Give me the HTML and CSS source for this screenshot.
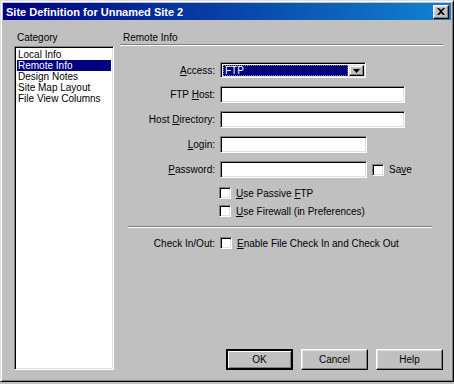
FILE: index.html
```html
<!doctype html>
<html lang="en">
    <head>
        <meta charset="utf-8">
        <title>Site Definition for Unnamed Site 2</title>
        <link rel="stylesheet" href="styles.css">
    </head>
    <body>
        <div class="dialog">
            <div class="titlebar">
                <span class="title">Site Definition for Unnamed Site 2</span>
                <span class="close">
                    <svg width="8" height="7" viewBox="0 0 8 7"><path d="M0 0h2l2 2 2-2h2L5 3.5 8 7H6L4 5 2 7H0l3-3.5z" fill="#000"/></svg>
                </span>
            </div>

            <div class="body">
                <div class="sidebar">
                    <div class="caption">Category</div>
                    <ul class="list sunken">
                        <li>Local Info</li>
                        <li class="selected">Remote Info</li>
                        <li>Design Notes</li>
                        <li>Site Map Layout</li>
                        <li>File View Columns</li>
                    </ul>
                </div>

                <div class="main">
                    <div class="caption">Remote Info</div>
                    <div class="groove"></div>

                    <div class="row r-access">
                        <label class="lbl"><u>A</u>ccess:</label>
                        <div class="select sunken">
                            <span class="picked">FTP</span>
                            <span class="arrow"><svg width="7" height="4" viewBox="0 0 7 4"><path d="M0 0h7L3.5 4z" fill="#000"/></svg></span>
                        </div>
                    </div>

                    <div class="row r-field">
                        <label class="lbl">FTP <u>H</u>ost:</label>
                        <div class="field wide sunken"></div>
                    </div>

                    <div class="row r-field">
                        <label class="lbl">Host <u>D</u>irectory:</label>
                        <div class="field wide sunken"></div>
                    </div>

                    <div class="row r-field">
                        <label class="lbl"><u>L</u>ogin:</label>
                        <div class="field sunken"></div>
                    </div>

                    <div class="row r-field">
                        <label class="lbl"><u>P</u>assword:</label>
                        <div class="field sunken"></div>
                        <span class="check sunken save-box"></span>
                        <span class="check-text">Sa<u>v</u>e</span>
                    </div>

                    <div class="row r-check first">
                        <span class="check sunken"></span>
                        <span class="check-text"><u>U</u>se Passive <u>F</u>TP</span>
                    </div>

                    <div class="row r-check second">
                        <span class="check sunken"></span>
                        <span class="check-text"><u>U</u>se Firewall (in Preferences)</span>
                    </div>

                    <div class="groove short"></div>

                    <div class="row r-check third">
                        <label class="lbl">Check In/Out:</label>
                        <span class="check sunken"></span>
                        <span class="check-text"><u>E</u>nable File Check In and Check Out</span>
                    </div>

                    <div class="buttons">
                        <button class="btn default">OK</button>
                        <button class="btn">Cancel</button>
                        <button class="btn">Help</button>
                    </div>
                </div>
            </div>
        </div>
    </body>
</html>
```

FILE: styles.css
```css
/* win98 style dialog */
html, body { margin: 0; }
body { font-family: "Liberation Sans", Arial, sans-serif; font-size: 10px; color: #000; background: #c0c0c0; }
ul { list-style: none; margin: 0; padding: 0; }
u { text-decoration: underline; }

.sunken { border: 1px solid; border-color: #808080 #fff #fff #808080; box-shadow: inset 1px 1px #000, inset -1px -1px #dfdfdf; background: #fff; box-sizing: border-box; }

.dialog { width: 454px; height: 382px; box-sizing: border-box; padding: 2px; border: 1px solid; border-color: #dfdfdf #000 #000 #dfdfdf; box-shadow: inset 1px 1px #fff, inset -1px -1px #808080; background: #c0c0c0; display: flex; flex-direction: column; }

.titlebar { height: 17px; display: flex; align-items: center; justify-content: space-between; padding: 0 2px 0 3px; background: linear-gradient(to right, #000080, #1084d0); }
.title { color: #fff; font-weight: bold; font-size: 11px; }
.close { width: 16px; height: 14px; box-sizing: border-box; display: flex; align-items: center; justify-content: center; background: #c0c0c0; border: 1px solid; border-color: #fff #000 #000 #fff; box-shadow: inset -1px -1px #808080, inset 1px 1px #dfdfdf; }

.body { flex: 1; display: flex; padding: 11px 8px 9px 11px; }
.caption { height: 13px; line-height: 13px; padding-left: 3px; }

.sidebar { width: 100px; display: flex; flex-direction: column; }
.list { flex: 1; margin-top: 2px; padding: 2px; }
.list li { height: 11px; line-height: 11px; padding-left: 1px; white-space: nowrap; }
.list li.selected { background: #000080; color: #fff; }

.main { flex: 1; margin-left: 6px; display: flex; flex-direction: column; }
.groove { height: 0; border-top: 1px solid #808080; border-bottom: 1px solid #fff; }
.groove.short { margin: 9px 11px 0 8px; }

.row { display: flex; align-items: center; }
.lbl { width: 100px; padding-right: 5px; box-sizing: border-box; text-align: right; white-space: nowrap; }
.r-access { margin-top: 16px; height: 16px; }
.r-field { margin-top: 8px; height: 17px; }
.r-check { height: 12px; }
.r-check.first { margin-top: 9px; padding-left: 99px; }
.r-check.second { margin-top: 6px; padding-left: 99px; }
.r-check.third { margin-top: 9px; }

.select { width: 146px; height: 16px; display: flex; align-items: stretch; padding: 2px 1px 1px 2px; }
.picked { flex: 1; background: #000080; color: #fff; line-height: 11px; padding-left: 2px; outline: 1px dotted #7f7fbf; outline-offset: -1px; }
.arrow { width: 15px; margin-left: 1px; box-sizing: border-box; display: flex; align-items: center; justify-content: center; background: #c0c0c0; border: 1px solid; border-color: #dfdfdf #000 #000 #dfdfdf; box-shadow: inset -1px -1px #808080, inset 1px 1px #fff; }

.field { width: 147px; height: 17px; }
.field.wide { width: 185px; }

.check { width: 12px; height: 12px; flex: none; }
.save-box { margin-left: 5px; }
.check-text { margin-left: 5px; white-space: nowrap; }

.buttons { margin-top: auto; display: flex; justify-content: flex-end; gap: 8px; }
.btn { width: 67px; height: 21px; font: inherit; background: #c0c0c0; padding: 0; border: 1px solid; border-color: #fff #000 #000 #fff; box-shadow: inset -1px -1px #808080, inset 1px 1px #dfdfdf; }
.btn.default { border: 2px solid #000; box-shadow: inset 1px 1px #fff, inset -1px -1px #808080; }
```
